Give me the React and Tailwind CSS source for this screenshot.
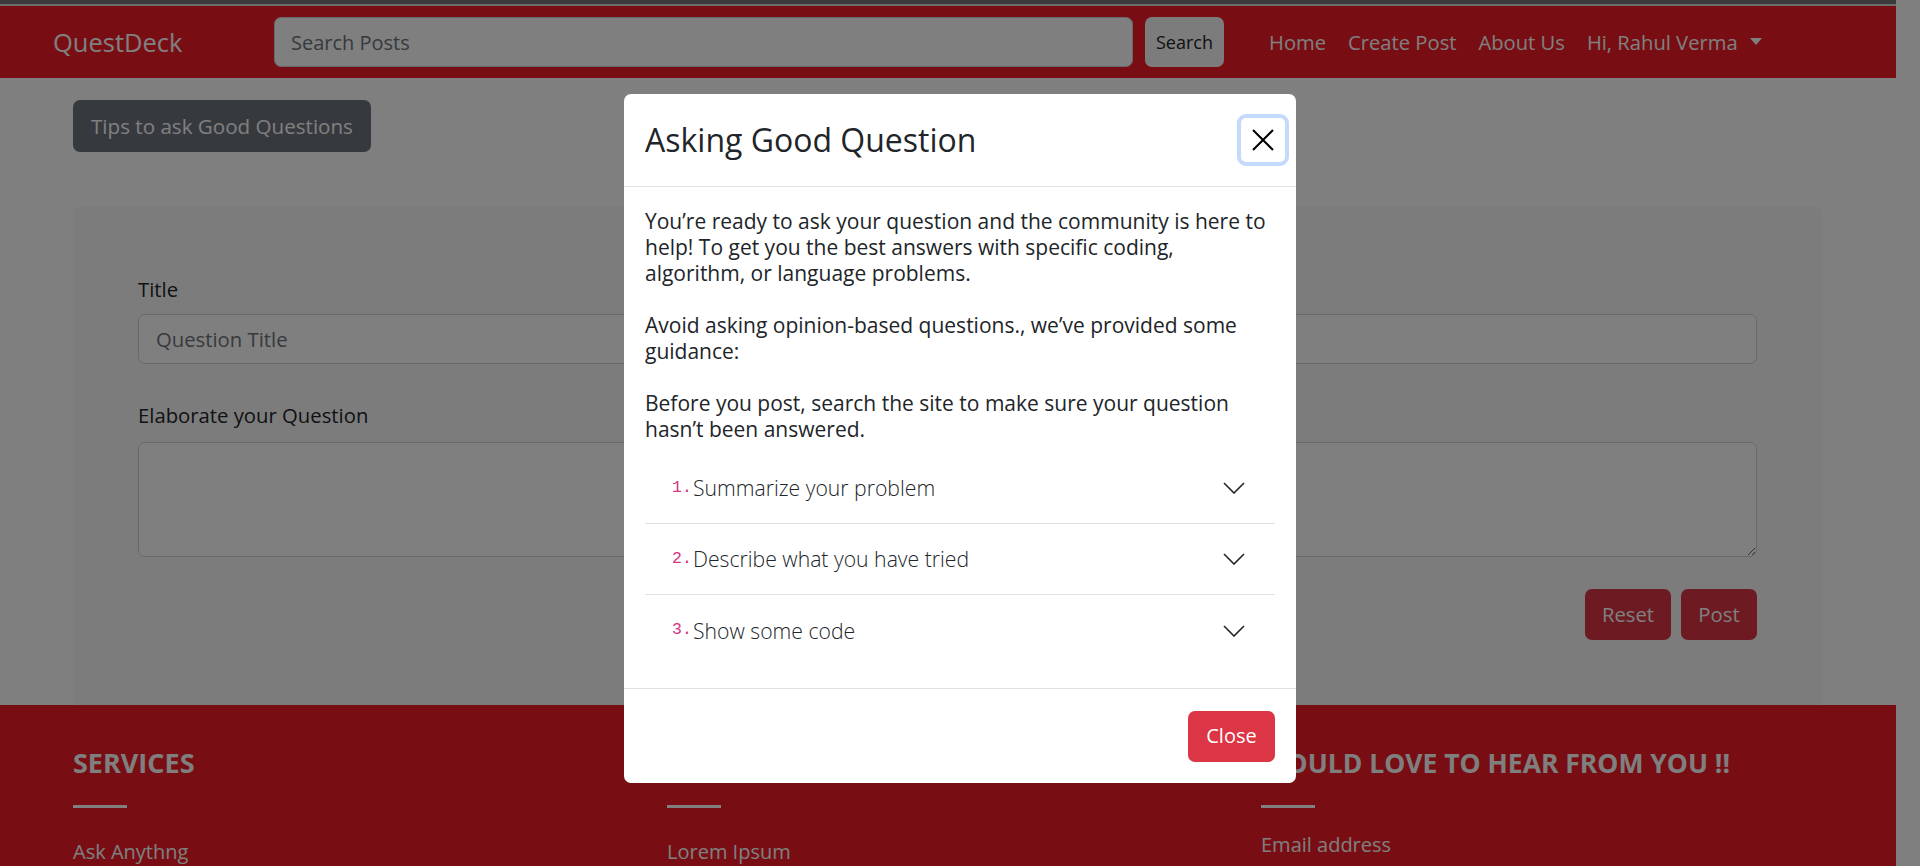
export default function App() {
  const items = [
    { n: "1.", t: "Summarize your problem" },
    { n: "2.", t: "Describe what you have tried" },
    { n: "3.", t: "Show some code" },
  ];
  return (
    <div className="relative h-[866px] w-[1920px] overflow-hidden bg-white font-['Open_Sans',sans-serif] text-[#212529]">
      <div className="w-[1896px]">
        <div className="h-[4px] bg-[#767676]" />
        <div className="h-[2px] bg-[#d6d6d6]" />
        <nav className="flex h-[72px] items-center bg-[#f01c26]">
          <a className="ml-[53px] w-[221px] text-[25.5px] leading-[36px] text-white">QuestDeck</a>
          <form className="flex items-center gap-[12px]">
            <input
              placeholder="Search Posts"
              className="h-[50px] w-[859px] rounded-[7px] border border-[#ced4da] bg-white px-[16px] text-[20px] placeholder:text-[#6c757d]"
            />
            <button type="button" className="h-[50px] w-[79px] rounded-[7px] bg-[#f8f9fa] text-[18px] text-[#212529]">
              Search
            </button>
          </form>
          <ul className="ml-[45px] flex items-center gap-[22px] text-[20.2px] text-white">
            <li>Home</li>
            <li>Create Post</li>
            <li>About Us</li>
            <li className="flex items-center gap-[12px]">
              Hi, Rahul Verma
              <svg width="12" height="7" viewBox="0 0 12 7">
                <polygon points="0,0 12,0 6,7" fill="white" />
              </svg>
            </li>
          </ul>
        </nav>

        <main className="px-[73px] pr-[74px] pt-[22px]">
          <button className="h-[52px] rounded-[7px] bg-[#6c757d] px-[18px] text-[20.6px] text-white">
            Tips to ask Good Questions
          </button>
          <div className="mt-[54px] rounded-t-[7px] bg-[#f8f9fa] px-[65px] pb-[65px] pt-[68px]">
            <label className="block text-[20.3px] leading-[30px]">Title</label>
            <input
              placeholder="Question Title"
              className="mt-[10px] block h-[50px] w-full rounded-[7px] border border-[#ced4da] bg-white px-[17px] text-[20.3px] placeholder:text-[#6c757d]"
            />
            <label className="mt-[36px] block text-[20.3px] leading-[30px]">Elaborate your Question</label>
            <textarea className="mt-[12px] block h-[115px] w-full rounded-[7px] border border-[#ced4da] bg-white px-[17px] text-[20px]" />
            <div className="mt-[32px] flex justify-end gap-[10px]">
              <button className="h-[51px] w-[86px] rounded-[7px] bg-[#dc3545] text-[20.3px] text-white">Reset</button>
              <button className="h-[51px] w-[76px] rounded-[7px] bg-[#dc3545] text-[20.3px] text-white">Post</button>
            </div>
          </div>
        </main>

        <footer className="grid h-[200px] grid-cols-[594px_594px_594px] bg-[#f01c26] pl-[73px] pt-[42px] text-white">
          <div>
            <h4 className="text-[27px] font-bold leading-[32px] uppercase">Services</h4>
            <div className="mt-[26px] h-[3px] w-[54px] bg-white" />
            <p className="mt-[29px] text-[20px] leading-[30px]">Ask Anythng</p>
          </div>
          <div>
            <h4 className="text-[27px] font-bold leading-[32px] uppercase">Quick Links</h4>
            <div className="mt-[26px] h-[3px] w-[54px] bg-white" />
            <p className="mt-[29px] text-[20px] leading-[30px]">Lorem Ipsum</p>
          </div>
          <div>
            <h4 className="text-[26.5px] font-bold leading-[32px] uppercase">Would love to hear from you !!</h4>
            <div className="mt-[26px] h-[3px] w-[54px] bg-white" />
            <p className="mt-[22px] text-[20px] leading-[30px]">Email address</p>
          </div>
        </footer>
      </div>

      <div className="absolute inset-0 bg-black/50" />

      <div className="absolute inset-0 flex justify-center pt-[94px]">
        <div className="flex h-[689px] w-[672px] flex-col rounded-[7px] bg-white">
          <div className="flex h-[93px] items-center justify-between border-b border-[#dee2e6] pl-[21px] pr-[7px]">
            <h5 className="text-[32px] font-medium leading-[40px] text-[#212529]">Asking Good Question</h5>
            <button className="flex h-[52px] w-[52px] items-center justify-center rounded-[9px] border-[4px] border-[#c4dafd] bg-white">
              <svg width="22" height="22" viewBox="0 0 22 22">
                <path d="M1 1L21 21M21 1L1 21" stroke="#000" strokeWidth="2" />
              </svg>
            </button>
          </div>
          <div className="flex-1 px-[21px] pb-[21px] pt-[21px]">
            <div className="whitespace-nowrap text-[21px] font-medium leading-[26px] text-[#212529]">
              <p className="mb-[26px]">
                You’re ready to ask your question and the community is here to
                <br />
                help! To get you the best answers with specific coding,
                <br />
                algorithm, or language problems.
              </p>
              <p className="mb-[26px]">
                Avoid asking opinion-based questions., we’ve provided some
                <br />
                guidance:
              </p>
              <p>
                Before you post, search the site to make sure your question
                <br />
                hasn’t been answered.
              </p>
            </div>
            <div className="mt-[11px]">
              {items.map((it, i) => (
                <div
                  key={it.n}
                  className={`flex h-[71px] items-center pl-[27px] pr-[30px] ${i < 2 ? "border-b border-[#dee2e6]" : ""}`}
                >
                  <code className="w-[21px] font-['Liberation_Mono',monospace] text-[16.5px] text-[#d63384]">{it.n}</code>
                  <span className="flex-1 text-[21.2px] font-light text-[#212529]">{it.t}</span>
                  <svg width="22" height="12" viewBox="0 0 22 12">
                    <polyline points="1,1 11,11 21,1" fill="none" stroke="#212529" strokeWidth="1.6" />
                  </svg>
                </div>
              ))}
            </div>
          </div>
          <div className="flex h-[95px] items-center justify-end border-t border-[#dee2e6] pr-[21px]">
            <button className="h-[51px] w-[87px] rounded-[7px] bg-[#dc3545] text-[20px] text-white">Close</button>
          </div>
        </div>
      </div>
    </div>
  );
}
